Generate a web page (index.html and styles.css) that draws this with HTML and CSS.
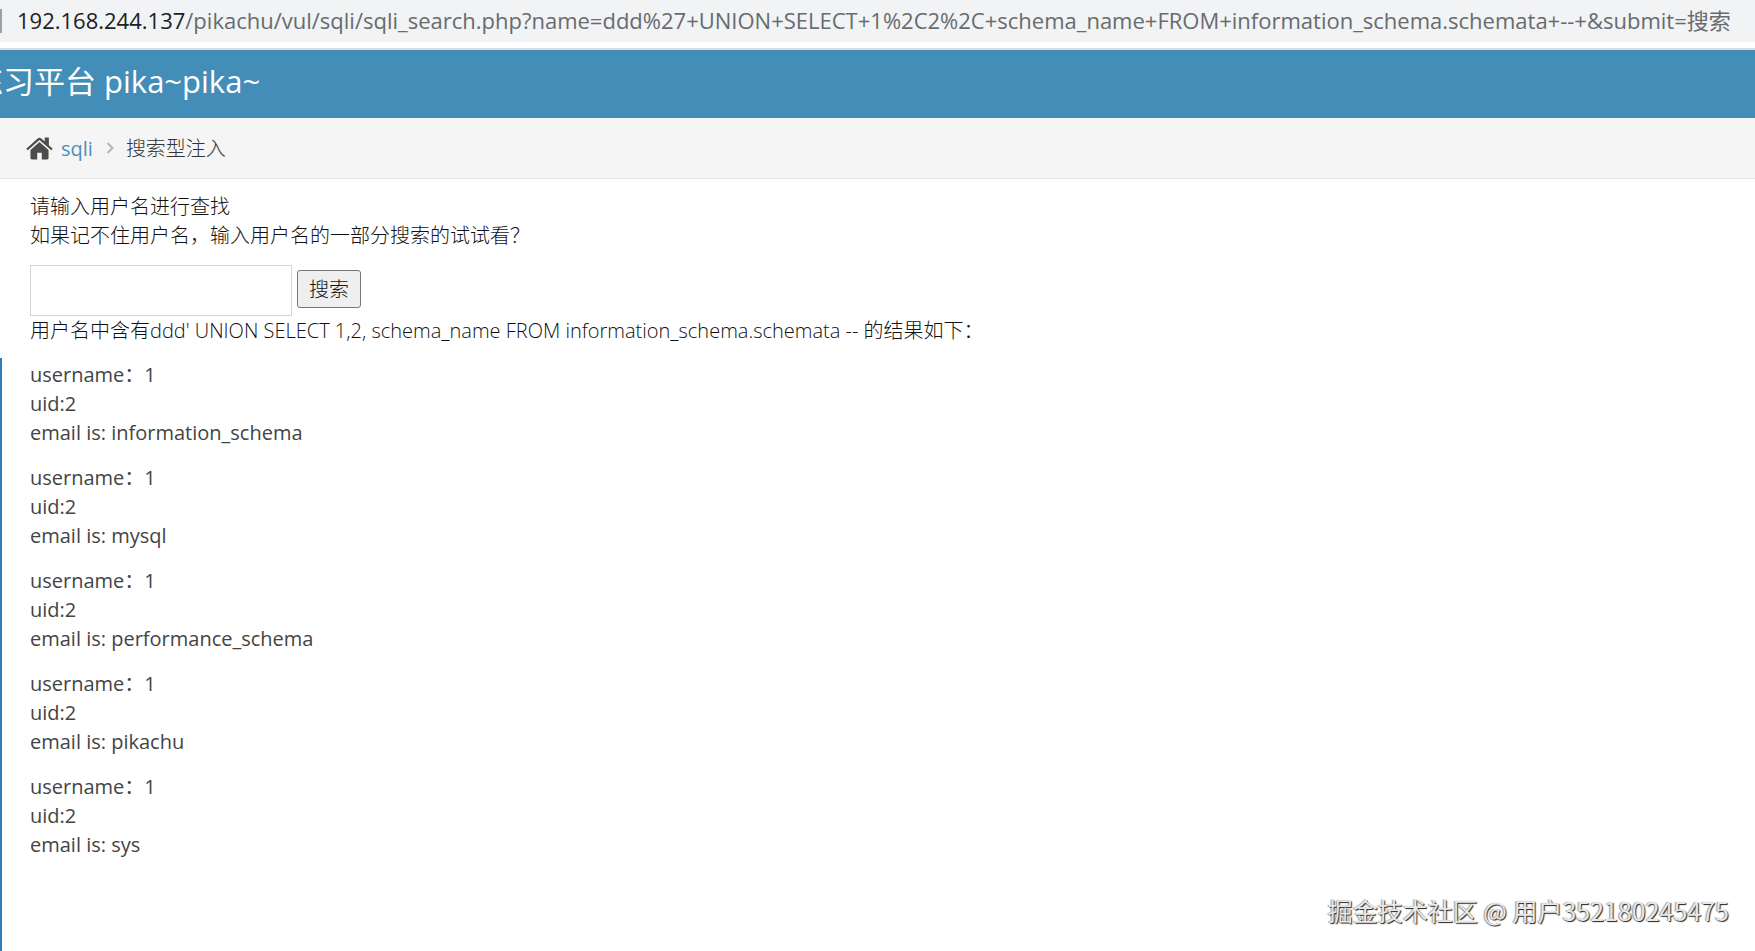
FILE: index.html
```html
<!DOCTYPE html>
<html lang="zh-CN">
<head>
  <meta charset="UTF-8">
  <title>Get the pikachu</title>
  <meta name="viewport" content="width=device-width, initial-scale=1.0">
  <link rel="stylesheet" href="styles.css">
</head>
<body>
  <div class="address-bar">
    <span class="divider"></span>
    <p class="url"><span class="host">192.168.244.137</span>/pikachu/vul/sqli/sqli_search.php?name=ddd%27+UNION+SELECT+1%2C2%2C+schema_name+FROM+information_schema.schemata+--+&amp;submit=搜索</p>
  </div>

  <header class="navbar">
    <h1 class="brand">练习平台 pika~pika~</h1>
  </header>

  <nav class="breadcrumbs">
    <svg class="home-icon" viewBox="0 0 26 22" aria-hidden="true">
      <path d="M13 4.800 4.300 12.500V20.200Q4.300 21.500 5.600 21.500H10.800V15.200H15.200V21.500H20.400Q21.700 21.500 21.700 20.200V12.500Z"/>
      <path d="M25.700 11.200 22 7.900V.5H18V4.200L14.800 1.300Q13 0 11.200 1.300L.3 11.200 1.700 12.800 13 2.900 24.300 12.800Z"/>
    </svg>
    <a href="sqli.php">sqli</a>
    <svg class="arrow" viewBox="0 0 8 12" aria-hidden="true"><path d="M1.500 1 6.500 6 1.500 11"/></svg>
    <span class="active">搜索型注入</span>
  </nav>

  <main class="page-content">
    <form class="search" method="get">
      <label class="tip" for="name">请输入用户名进行查找<br>如果记不住用户名，输入用户名的一部分搜索的试试看？</label>
      <div class="search-row">
        <input type="text" id="name" name="name">
        <button type="submit" name="submit">搜索</button>
      </div>
    </form>
    <p class="notice">用户名中含有ddd' UNION SELECT 1,2, schema_name FROM information_schema.schemata -- 的结果如下：</p>

    <div class="results">
      <p>username：1<br>uid:2<br>email is: information_schema</p>
      <p>username：1<br>uid:2<br>email is: mysql</p>
      <p>username：1<br>uid:2<br>email is: performance_schema</p>
      <p>username：1<br>uid:2<br>email is: pikachu</p>
      <p>username：1<br>uid:2<br>email is: sys</p>
    </div>
  </main>

  <div class="watermark">掘金技术社区 @ 用户352180245475</div>
</body>
</html>
```

FILE: styles.css
```css
* {
  box-sizing: border-box;
}
body {
  margin: 0;
  min-height: 100vh;
  display: flex;
  flex-direction: column;
  position: relative;
  overflow-x: hidden;
  font-family: "Open Sans", "Noto Sans CJK SC", sans-serif;
  font-size: 20px;
  line-height: 29px;
  color: #444;
  background-color: #fff;
}
p {
  margin: 0;
}
.address-bar {
  display: flex;
  align-items: center;
  gap: 15px;
  height: 50px;
  padding-bottom: 9px;
  background: linear-gradient(#f1f3f4 42px, #fff 42px, #fff 48px, #dadde0 48px);
}
.divider {
  width: 2px;
  height: 24px;
  background-color: #9aa0a6;
}
.url {
  font-size: 22px;
  white-space: nowrap;
  color: #686b6f;
}
.host {
  color: #202124;
}
.navbar {
  height: 68px;
  overflow: hidden;
  background-color: #438eb9;
}
.brand {
  margin: 0 0 0 -28px;
  font-size: 31px;
  font-weight: 400;
  line-height: 62px;
  white-space: nowrap;
  color: #fff;
}
.breadcrumbs {
  display: flex;
  align-items: center;
  height: 61px;
  padding-left: 26px;
  border-bottom: 1px solid #e5e5e5;
  background-color: #f5f5f5;
}
.home-icon {
  width: 27px;
  height: 23px;
  margin-right: 8px;
  fill: #4c4c4c;
}
.breadcrumbs a {
  color: #4c8fbd;
  text-decoration: none;
}
.arrow {
  width: 8px;
  height: 12px;
  margin: 0 12px 0 13px;
  fill: none;
  stroke: #b2b6bf;
  stroke-width: 2;
}
.active {
  font-weight: 300;
  color: #333;
}
.page-content {
  flex: 1;
  display: flex;
  flex-direction: column;
  padding-top: 13px;
}
.search,
.notice {
  padding-left: 30px;
  font-weight: 300;
  color: #111;
}
.tip {
  display: block;
}
.search-row {
  display: flex;
  align-items: center;
  gap: 5px;
  margin-top: 15px;
}
.search input {
  width: 262px;
  height: 51px;
  padding: 8px;
  border: 1px solid #d5d5d5;
  font: inherit;
}
.search button {
  height: 38px;
  padding: 0 11px;
  margin-bottom: 3px;
  border: 1px solid #767676;
  border-radius: 3px;
  background-color: #efefef;
  font: inherit;
  color: #111;
}
.results {
  flex: 1;
  display: flex;
  flex-direction: column;
  gap: 16px;
  margin-top: 13px;
  padding: 2px 28px;
  border-left: 2px solid #2b7dbc;
}
.watermark {
  position: absolute;
  right: 26px;
  bottom: 23px;
  font-family: "Noto Sans CJK SC", sans-serif;
  font-size: 25px;
  line-height: 36px;
  color: #e8e8e8;
  text-shadow: 1px 1px 1px #222, -1px 0 1px #999;
}
```
